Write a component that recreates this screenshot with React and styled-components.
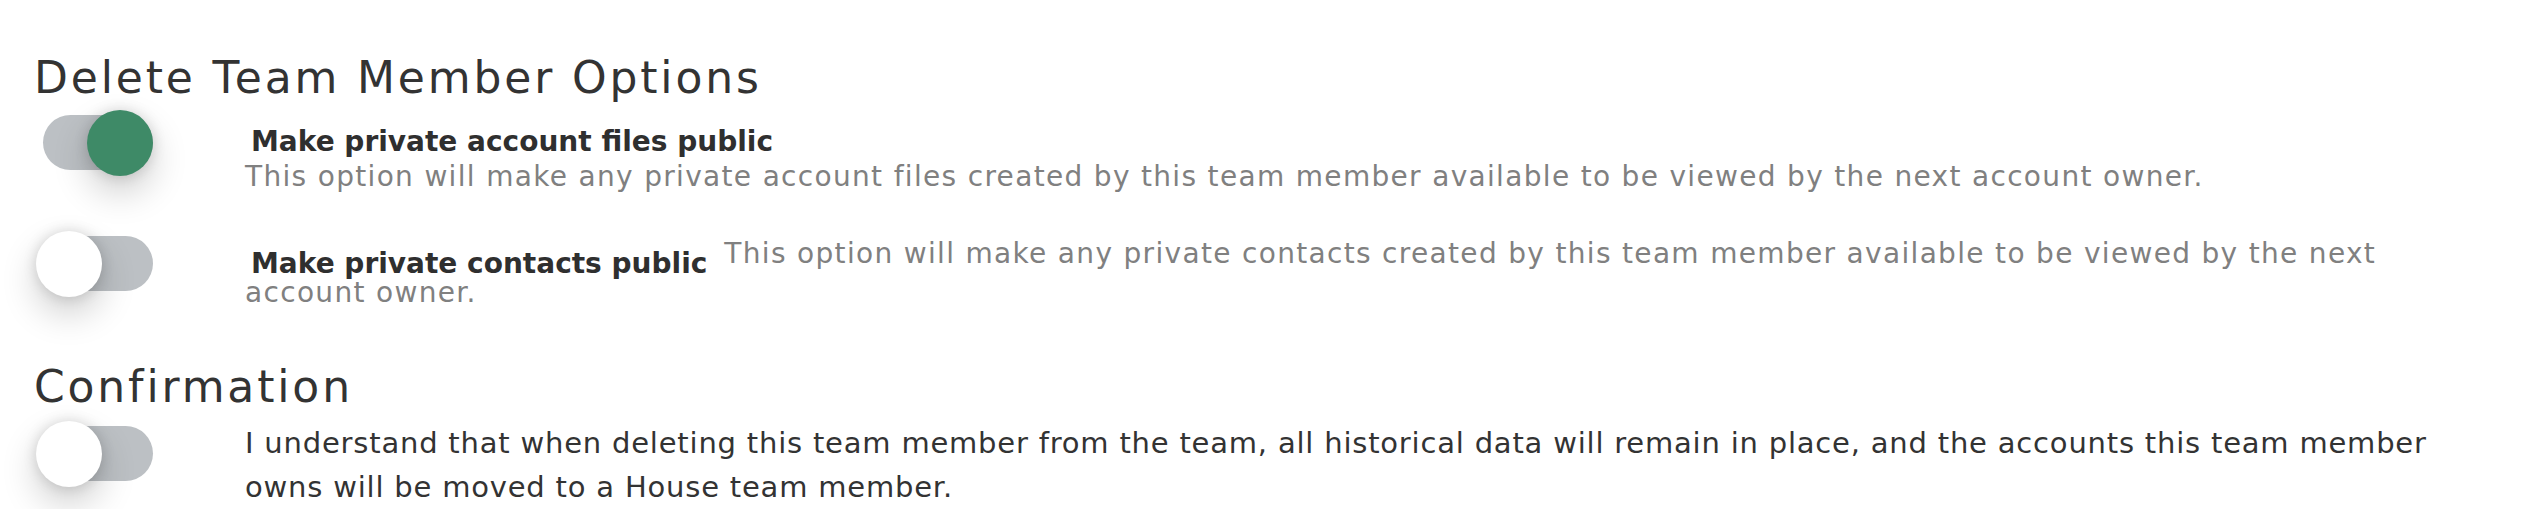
import React, { useState } from "react";
import styled, { createGlobalStyle } from "styled-components";

const GlobalStyle = createGlobalStyle`
  body {
    margin: 0;
    background: #ffffff;
    font-family: "DejaVu Sans", "Liberation Sans", sans-serif;
  }
`;

const Page = styled.div`
  padding: 52px 70px 0 34px;
`;

const Heading = styled.h2`
  margin: 0 0 ${props => props.gap}px 0;
  font-size: 44px;
  line-height: 52px;
  font-weight: 400;
  letter-spacing: 2.85px;
  color: #333333;
`;

const Row = styled.div`
  display: flex;
  align-items: flex-start;
  margin-bottom: ${props => props.gap || 0}px;
`;

const SwitchCell = styled.div`
  width: 211px;
  flex-shrink: 0;
  padding-top: ${props => props.offset || 0}px;
`;

const Track = styled.button`
  position: relative;
  display: block;
  width: 110px;
  height: 55px;
  margin-left: 9px;
  padding: 0;
  border: none;
  border-radius: 28px;
  background: #bcc0c4;
  cursor: pointer;
`;

const Knob = styled.span`
  position: absolute;
  top: -5px;
  left: ${props => (props.on ? 44 : -7)}px;
  width: 66px;
  height: 66px;
  border-radius: 50%;
  background: ${props => (props.on ? "#3e8a67" : "#ffffff")};
  box-shadow: 0 0 14px rgba(0, 0, 0, 0.15), 0 16px 36px rgba(0, 0, 0, 0.2);
  transition: left 0.2s;
`;

const TextBlock = styled.div`
  flex: 1;
  margin-top: ${props => props.offset || 0}px;
`;

const OptionTitle = styled.div`
  padding-left: 6px;
  font-size: 28px;
  line-height: 35px;
  font-weight: 700;
  color: #2f2f2f;
`;

const OptionText = styled.div`
  font-size: 28px;
  line-height: ${props => props.lh || 35}px;
  letter-spacing: 1.32px;
  color: #808080;
`;

const InlineTitle = styled.span`
  padding-left: 6px;
  margin-right: 17px;
  font-weight: 700;
  letter-spacing: 0;
  color: #2f2f2f;
  vertical-align: -10px;
`;

const ConfirmText = styled.div`
  font-size: 29px;
  line-height: 44px;
  letter-spacing: 0.8px;
  color: #333333;
`;

const Switch = ({ on, onToggle }) => (
  <Track type="button" onClick={onToggle} aria-pressed={on}>
    <Knob on={on ? 1 : 0} />
  </Track>
);

export default function App() {
  const [files, setFiles] = useState(true);
  const [contacts, setContacts] = useState(false);
  const [confirm, setConfirm] = useState(false);

  return (
    <>
      <GlobalStyle />
      <Page>
        <Heading gap={11}>Delete Team Member Options</Heading>

        <Row gap={42}>
          <SwitchCell>
            <Switch on={files} onToggle={() => setFiles(!files)} />
          </SwitchCell>
          <TextBlock offset={9}>
            <OptionTitle>Make private account files public</OptionTitle>
            <OptionText>
              This option will make any private account files created by this
              team member available to be viewed by the next account owner.
            </OptionText>
          </TextBlock>
        </Row>

        <Row gap={54}>
          <SwitchCell>
            <Switch on={contacts} onToggle={() => setContacts(!contacts)} />
          </SwitchCell>
          <TextBlock offset={3}>
            <OptionText lh={29}>
              <InlineTitle>Make private contacts public</InlineTitle>
              This option will make any private contacts created by this team
              member available to be viewed by the next account owner.
            </OptionText>
          </TextBlock>
        </Row>

        <Heading gap={8}>Confirmation</Heading>

        <Row>
          <SwitchCell offset={5}>
            <Switch on={confirm} onToggle={() => setConfirm(!confirm)} />
          </SwitchCell>
          <TextBlock>
            <ConfirmText>
              I understand that when deleting this team member from the team,
              all historical data will remain in place, and the accounts this
              team member owns will be moved to a House team member.
            </ConfirmText>
          </TextBlock>
        </Row>
      </Page>
    </>
  );
}
